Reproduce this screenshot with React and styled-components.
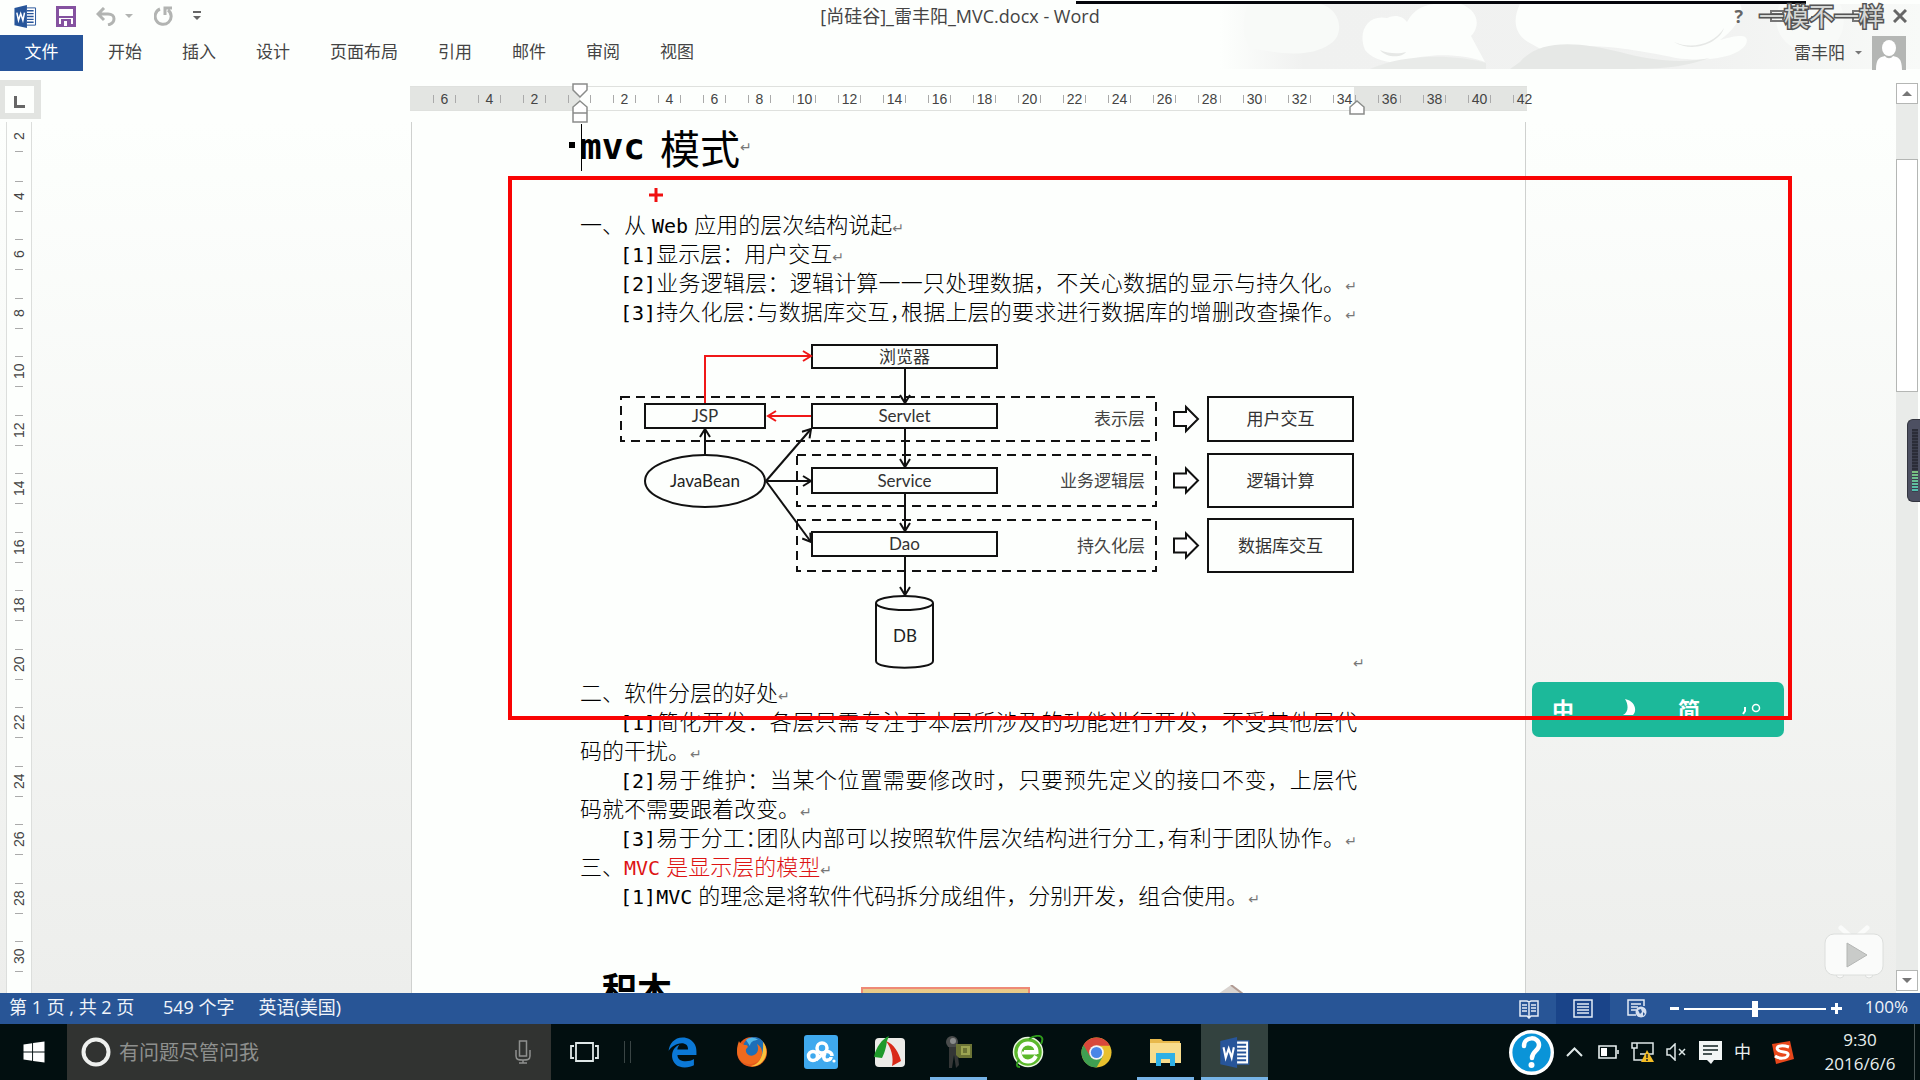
import React from "react";
import styled, { createGlobalStyle, css } from "styled-components";
import { FaEdgeLegacy, FaWindows, FaInternetExplorer } from "react-icons/fa";

const Global = createGlobalStyle`
  * { box-sizing: border-box; }
  body { margin: 0; background: #fdfffd; overflow: hidden; }
  button, input { font: inherit; color: inherit; border: 0; padding: 0; margin: 0; background: none; }
  button { cursor: pointer; }
  svg { display: block; flex: none; }
`;

const UI = '"Open Sans", "Noto Sans CJK SC", sans-serif';

const Desktop = styled.div`
  position: relative;
  height: 100vh;
  display: flex;
  flex-direction: column;
  font-family: ${UI};
  font-size: 17px;
  line-height: 24px;
  color: #444;
  overflow: hidden;
`;

/* ---------- header ---------- */
const Header = styled.header`
  position: relative;
  height: 71px;
  flex: none;
  display: flex;
  flex-direction: column;
`;
const HeaderArt = styled.svg`
  position: absolute;
  right: 0;
  top: 4px;
`;
const TitleRow = styled.div`
  position: relative;
  height: 35px;
  display: flex;
  align-items: center;
  padding-bottom: 3px;
`;
const QuickAccess = styled.div`
  flex: 1;
  display: flex;
  align-items: center;
  padding-left: 13px;
`;
const QuickButton = styled.button`
  display: flex;
  margin-right: ${(p) => p.$gap || 0}px;
`;
const Title = styled.h1`
  margin: 0;
  font-size: 18px;
  font-weight: 400;
  white-space: nowrap;
`;
const WindowButtons = styled.div`
  flex: 1;
  display: flex;
  justify-content: flex-end;
  align-items: center;
  gap: 27px;
  padding-right: 13px;
`;
const WindowButton = styled.button`
  display: flex;
  font-weight: 700;
  font-size: 18px;
  color: #666;
`;
const TabRow = styled.nav`
  position: relative;
  height: 36px;
  display: flex;
  align-items: stretch;
`;
const FileTab = styled.button`
  width: 83px;
  background: #27559a;
  color: #fff;
  padding-bottom: 3px;
`;
const Tabs = styled.div`
  flex: 1;
  display: flex;
  gap: 40px;
  padding-left: 25px;
  padding-bottom: 3px;
`;
const Account = styled.div`
  display: flex;
  align-items: center;
  gap: 10px;
  padding-right: 14px;
`;

/* ---------- work area ---------- */
const Body = styled.div`
  flex: 1;
  min-height: 0;
  display: grid;
  grid-template-columns: 41px 1fr 24px;
  grid-template-rows: 51px 1fr;
`;
const Corner = styled.div`
  padding-top: 9px;
`;
const TabSelector = styled.button`
  display: flex;
  align-items: flex-end;
  justify-content: center;
  width: 41px;
  height: 39px;
  padding-bottom: 5px;
  border: solid #e2e4e1;
  border-width: 6px 7px 6px 5px;
  background: #fdfffd;
`;
const RulerBar = styled.div`
  display: flex;
  justify-content: center;
  padding-top: 15px;
`;
const Ruler = styled.div`
  position: relative;
  width: 1117px;
  height: 25px;
  padding: 1px 0 0 12px;
  display: flex;
  border: solid #dfe1de;
  border-width: 1px 0;
  background: linear-gradient(90deg, #e3e5e2 170px, #fdfffd 170px, #fdfffd 944px, #e3e5e2 944px);
  font: 14px/22px "Liberation Sans", sans-serif;
  color: #444;
`;
const RulerCell = styled.span`
  flex: none;
  width: 45px;
  display: flex;
  align-items: center;
  justify-content: center;
  &::before, &::after {
    content: "";
    width: 1px;
    height: 8px;
    background: #aaa;
  }
  &:last-of-type::after { background: transparent; }
`;
const RulerNumber = styled.span`
  width: 21px;
  display: flex;
  justify-content: center;
`;
const Marker = styled.svg`
  position: absolute;
  left: ${(p) => p.$left}px;
  top: ${(p) => p.$top}px;
`;
const Scroll = styled.div`
  grid-column: 3;
  grid-row: 1 / 3;
  margin: 12px 2px 2px 0;
  width: 22px;
  display: flex;
  flex-direction: column;
  background: #e9ebe9;
`;
const ScrollButton = styled.button`
  height: 21px;
  display: flex;
  align-items: center;
  justify-content: center;
  background: #fff;
  border: 1px solid #b4b6b4;
`;
const ScrollTrack = styled.div`
  flex: 1;
  padding-top: 55px;
`;
const ScrollThumb = styled.div`
  height: 233px;
  background: #fff;
  border: 1px solid #b4b6b4;
`;
const Side = styled.div`
  display: flex;
  padding-left: 6px;
  background: linear-gradient(#fdfffd, #edeeec);
`;
const VRuler = styled.div`
  width: 26px;
  display: flex;
  flex-direction: column;
  padding-bottom: 7px;
  background: #fdfffd;
  border: solid #dcdedc;
  border-width: 0 1px;
  font: 14px/16px "Liberation Sans", sans-serif;
  color: #444;
`;
const VCell = styled.span`
  flex: ${(p) => (p.$first ? "0 0 45px" : 1)};
  display: flex;
  flex-direction: column;
  align-items: center;
  justify-content: ${(p) => (p.$first ? "flex-start" : "center")};
  &::before, &::after {
    content: "";
    width: 8px;
    height: ${(p) => (p.$first ? 0 : 1)}px;
    background: #aaa;
  }
  &::after { height: 1px; }
`;
const VNumber = styled.span`
  height: 29px;
  display: flex;
  align-items: center;
  justify-content: center;
  writing-mode: vertical-rl;
  transform: rotate(180deg);
`;
const Canvas = styled.main`
  min-height: 0;
  display: flex;
  justify-content: center;
  background: linear-gradient(#fdfffd, #edeeec);
  overflow: hidden;
`;
const Page = styled.article`
  width: 1115px;
  padding: 0 168px;
  background: #fdfffd;
  border: solid #cfd1cf;
  border-width: 0 1px;
  color: #000;
  font: 22px/29px "DejaVu Sans Mono", "Noto Sans CJK SC", sans-serif;
`;
const Heading = styled.h2`
  position: relative;
  display: flex;
  align-items: center;
  height: 50px;
  margin: 0 0 37px;
  font: 400 40px/50px "Noto Sans CJK SC", sans-serif;
  color: #000;
`;
const HeadingLatin = styled.span`
  font: 700 36px/50px "DejaVu Sans Mono", monospace;
  margin-right: 15px;
`;
const Caret = styled.span`
  position: absolute;
  left: 1px;
  top: 2px;
  width: 1px;
  height: 47px;
  background: #000;
`;
const Bullet = styled.span`
  position: absolute;
  left: -11px;
  top: 20px;
  width: 6px;
  height: 6px;
  background: #000;
`;
const Line = styled.p`
  margin: 0;
  font-family: "Noto Sans CJK SC", sans-serif;
  font-weight: 300;
  text-align: justify;
  text-align-last: ${(p) => (p.$full ? "justify" : "auto")};
  text-indent: ${(p) => (p.$item ? 40 : 0)}px;
  text-autospace: no-autospace;
  text-spacing-trim: space-all;
`;
const Latin = styled.span`
  font: 20px/20px "DejaVu Sans Mono", monospace;
  margin-left: ${(p) => (p.$before ? 6 : 0)}px;
  margin-right: ${(p) => (p.$after ? 6 : 0)}px;
`;
const Half = styled.span`
  font-feature-settings: "halt";
`;
const Red = styled.span`
  color: #dd1414;
`;
const Mark = styled.span`
  font: 14px/14px "DejaVu Sans", sans-serif;
  color: #777;
`;
const DiagramSvg = styled.svg`
  overflow: visible;
`;
const NextSection = styled.div`
  display: flex;
  align-items: flex-start;
  padding: 55px 0 0 22px;
`;
const NextTitle = styled.h2`
  margin: 0;
  width: 259px;
  font: 700 35px/48px "Noto Sans CJK SC", sans-serif;
  color: #000;
`;
const NextBox = styled.div`
  width: 169px;
  height: 30px;
  margin: 23px 188px 0 0;
  border: 2px solid #ee8a76;
  background: linear-gradient(#e9c98a, #e2d07f);
`;
const NextShape = styled.svg`
  margin-top: 21px;
`;

/* ---------- status bar ---------- */
const StatusBar = styled.footer`
  height: 31px;
  flex: none;
  display: flex;
  align-items: stretch;
  background: #285596;
  color: #f0f4fa;
`;
const StatusInfo = styled.div`
  flex: 1;
  display: flex;
  align-items: center;
  gap: 24px;
  padding: 0 0 3px 9px;
  font-size: 18px;
`;
const PageCount = styled.span`
  min-width: 130px;
`;
const ViewButton = styled.button`
  width: 54px;
  display: flex;
  align-items: center;
  justify-content: center;
  background: ${(p) => (p.$active ? "#1a4489" : "transparent")};
`;
const Zoom = styled.label`
  display: flex;
  align-items: center;
  gap: 5px;
  padding-left: 6px;
`;
const Range = styled.input`
  appearance: none;
  width: 142px;
  height: 16px;
  background: linear-gradient(#fff, #fff) center / 100% 2px no-repeat;
  &::-webkit-slider-thumb {
    appearance: none;
    width: 6px;
    height: 16px;
    background: #fff;
  }
`;
const Percent = styled.output`
  width: 78px;
  padding: 0 12px 3px 0;
  text-align: right;
  align-self: center;
`;

/* ---------- task bar ---------- */
const TaskBar = styled.div`
  height: 56px;
  flex: none;
  display: flex;
  align-items: stretch;
  background: #020f10;
  color: #e8efef;
`;
const Start = styled.button`
  width: 67px;
  display: flex;
  align-items: center;
  justify-content: center;
  color: #fff;
`;
const Search = styled.label`
  width: 484px;
  display: flex;
  align-items: center;
  padding: 0 20px 0 14px;
  background: #313331;
`;
const SearchInput = styled.input`
  flex: 1;
  min-width: 0;
  height: 32px;
  margin-left: 8px;
  font-size: 20px;
  outline: 0;
  &::placeholder { color: #8e908e; opacity: 1; }
`;
const TaskView = styled.button`
  padding: 0 25px 0 19px;
  display: flex;
  align-items: center;
`;
const Divider = styled.span`
  align-self: center;
  width: 7px;
  height: 22px;
  margin-right: 18px;
  border: solid #3a4545;
  border-width: 0 1px;
`;
const Apps = styled.div`
  flex: 1;
  display: flex;
  gap: 2px;
`;
const TaskButton = styled.button`
  width: 67px;
  display: flex;
  align-items: center;
  justify-content: center;
  ${(p) => p.$running && css`
    background: linear-gradient(#76b3e6, #76b3e6) bottom / 57px 3px no-repeat;
  `}
  ${(p) => p.$active && css`
    background: linear-gradient(#76b3e6, #76b3e6) bottom / 100% 3px no-repeat, #33423f;
  `}
`;
const Tray = styled.div`
  display: flex;
  align-items: center;
  gap: 12px;
`;
const TrayButton = styled.button`
  display: flex;
  margin-right: ${(p) => p.$gap || 0}px;
`;
const Clock = styled.time`
  width: 108px;
  text-align: center;
  font-size: 17px;
`;
const ShowDesktop = styled.button`
  align-self: stretch;
  width: 6px;
  margin-left: -12px;
  border-left: 1px solid #4a5555;
`;

/* ---------- overlays ---------- */
const Selection = styled.div`
  position: absolute;
  left: 508px;
  top: 176px;
  width: 1284px;
  height: 544px;
  border: 4px solid #f90404;
  pointer-events: none;
`;
const Cross = styled.svg`
  position: absolute;
  left: 649px;
  top: 188px;
`;
const Watermark = styled.div`
  position: absolute;
  right: 36px;
  top: 1px;
  font: 25px/28px "Noto Sans CJK SC", sans-serif;
  color: #d6d8d6;
  -webkit-text-stroke: 3px #555;
  paint-order: stroke fill;
`;
const TopStrip = styled.div`
  position: absolute;
  left: 1076px;
  top: 1px;
  width: 730px;
  height: 3px;
  background: #05060c;
`;
const Ime = styled.div`
  position: absolute;
  left: 1532px;
  top: 682px;
  width: 252px;
  height: 55px;
  border-radius: 7px;
  background: #1cb99a;
  color: #fff;
`;
const ImeRow = styled.div`
  height: 36px;
  overflow: hidden;
  display: flex;
  justify-content: space-between;
  padding: 13px 22px 0 20px;
  font: 700 22px/26px "Noto Sans CJK SC", sans-serif;
`;
const Level = styled.div`
  position: absolute;
  right: 0;
  top: 419px;
  width: 13px;
  height: 83px;
  padding: 9px 2px 9px 4px;
  border-radius: 6px 0 0 6px;
  background: #4d5062;
  border: solid #33353f;
  border-width: 1px 0 1px 1px;
`;
const LevelBars = styled.div`
  height: 100%;
  background:
    repeating-linear-gradient(transparent 0 2px, #3b3e4c 2px 3px),
    linear-gradient(#2b2d38 65%, #7fc07a 65%, #4fc0b4);
`;
const Player = styled.svg`
  position: absolute;
  right: 35px;
  bottom: 99px;
`;

/* ---------- drawings ---------- */
const WordIcon = ({ w, h }) => (
  <svg width={w} height={h} viewBox="0 0 24 24">
    <path d="M12 3h11v18H12z" fill="#fff" stroke="#27559a" />
    <path d="M14 6h7M14 9h7M14 12h7M14 15h7M14 18h7" stroke="#27559a" strokeWidth="1.4" />
    <path d="M1 3l13-3v24L1 21z" fill="#27559a" />
    <path d="M3.5 8l1.7 8L7.5 9l2.3 7 1.7-8" fill="none" stroke="#fff" strokeWidth="1.6" />
  </svg>
);

const Tri = ({ up, s = 8, fill = "#777" }) => (
  <svg width={s} height={s / 2} viewBox="0 0 8 4"><path d={up ? "M0 4l4-4 4 4z" : "M0 0h8L4 4z"} fill={fill} /></svg>
);

const appIcons = [
  { name: "Edge", icon: <FaEdgeLegacy size={31} color="#0b78d6" /> },
  {
    name: "Firefox",
    icon: (
      <svg width="32" height="32" viewBox="0 0 32 32">
        <circle cx="16" cy="16" r="15" fill="#e5591c" />
        <circle cx="18" cy="12" r="11" fill="#1d6fb8" />
        <path d="M10 4c3-3 9-3 12 0-4 0-8 2-8 6z" fill="#54b8e8" />
        <path d="M3 5c1 3 3 3 6 4 3 0 4 2 1 4-1 5 4 8 8 6 4-2 5-6 3-11 5 3 7 9 3 15-5 7-17 7-21-1C0 16 1 10 3 5z" fill="#ef6a1e" />
        <path d="M27 6c4 5 5 13 0 19-3 4-8 6-12 5 8-2 13-9 12-24z" fill="#fbc23c" />
      </svg>
    ),
  },
  {
    name: "百度云",
    icon: (
      <svg width="34" height="34" viewBox="0 0 34 34">
        <rect width="34" height="34" rx="3" fill="#3fa9ee" />
        <g fill="none" stroke="#fff" strokeWidth="3.500">
          <circle cx="18" cy="13" r="5" /><circle cx="9" cy="21" r="4.500" />
          <path d="M12 25l8-7c3-3 8-1 8 3M21 18c-3 5 0 8 3 7 2 0 3-2 3-3" />
        </g>
        <circle cx="30" cy="26" r="1.600" fill="#fff" />
      </svg>
    ),
  },
  {
    name: "FastStone",
    icon: (
      <svg width="32" height="32" viewBox="0 0 32 32">
        <rect x="1" y="2" width="30" height="29" rx="4" fill="#ecebe8" />
        <path d="M0 21C2 11 8 3 15 0l-2 5c-1 8-3 13-5 17z" fill="#1f9a2a" />
        <path d="M12 5c8 3 13 12 15 20l-9 5c2-9-1-18-6-25z" fill="#d92a18" />
      </svg>
    ),
  },
  {
    name: "录像",
    running: true,
    icon: (
      <svg width="30" height="32" viewBox="0 0 30 32">
        <circle cx="8" cy="6" r="6" fill="#4a4c4c" /><circle cx="9" cy="5" r="3" fill="#8a8c8c" />
        <path d="M5 11h8l2 18-3 3-2-13-2 13H5z" fill="#343636" />
        <path d="M12 8h16v14H15l-3-3z" fill="#6c7436" /><path d="M17 10h9v9h-9z" fill="#9ca552" />
        <path d="M19 12h4v5h-4z" fill="#6c7436" />
      </svg>
    ),
  },
  {
    name: "浏览器",
    icon: (
      <svg width="32" height="34" viewBox="0 0 32 34">
        <circle cx="16" cy="17" r="14.500" fill="#5cb82c" stroke="#e9f6e0" strokeWidth="1.500" />
        <path d="M24 21c-2 4-5 5.500-8 5.500-5 0-8.500-4-8.500-9s3.500-9 8.500-9 8.500 3.500 8.500 8.500H12" fill="none" stroke="#fff" strokeWidth="4" />
        <path d="M10 18h15" stroke="#fff" strokeWidth="3" />
        <path d="M17 4c6-4 12-4 13-1 1 2 0 4-1 6M7 25c-3 4-3 7 1 7" fill="none" stroke="#2f9a1c" strokeWidth="2" />
      </svg>
    ),
  },
  {
    name: "Chrome",
    icon: (
      <svg width="31" height="31" viewBox="0 0 32 32">
        <circle cx="16" cy="16" r="15.500" fill="#e8c02d" />
        <path d="M16 16L2.600 8.200A15.500 15.500 0 0 0 16 31.500L22.500 20z" fill="#3f9f52" />
        <path d="M2.600 8.200L9.500 20 16 9h13.800L29.400 8.200A15.500 15.500 0 0 0 2.600 8.200z" fill="#d8483b" />
        <circle cx="16" cy="16" r="7.500" fill="#f4f4f4" /><circle cx="16" cy="16" r="5.800" fill="#4a86e8" />
      </svg>
    ),
  },
  {
    name: "资源管理器",
    running: true,
    icon: (
      <svg width="31" height="28" viewBox="0 0 31 28">
        <path d="M0 1h11l2 2h17v22H0z" fill="#e8b94c" /><path d="M0 5h31v20H0z" fill="#f8dc8c" />
        <path d="M6 28V15h19v13h-5v-7h-9v7z" fill="#2fb0e6" />
      </svg>
    ),
  },
  { name: "Word", running: true, active: true, icon: <WordIcon w={33} h={31} /> },
];

const boxes = [
  [812, 345, 185, 23, "浏览器"],
  [812, 404, 185, 24, "Servlet"],
  [645, 404, 120, 24, "JSP"],
  [812, 468, 185, 25, "Service"],
  [812, 532, 185, 24, "Dao"],
  [1208, 397, 145, 44, "用户交互"],
  [1208, 454, 145, 53, "逻辑计算"],
  [1208, 519, 145, 53, "数据库交互"],
];
const layers = [
  [621, 397, 535, 44, "表示层"],
  [797, 455, 359, 51, "业务逻辑层"],
  [797, 520, 359, 51, "持久化层"],
];
const arrows = ["M905 368V403", "M905 428V467", "M905 493V531", "M905 556V595", "M705 454V429", "M766 481L811 429", "M766 481H811", "M766 481L811 542"];

const Diagram = () => (
  <DiagramSvg viewBox="580 325 779 352" width="779" height="352" fontFamily='Lato, "Noto Sans CJK SC", sans-serif' fontSize="17">
    <defs>
      {[["black", "#111"], ["red", "#f01818"]].map(([id, c]) => (
        <marker key={id} id={id} viewBox="0 0 12 12" refX="10" refY="6" markerWidth="12" markerHeight="12" markerUnits="userSpaceOnUse" orient="auto">
          <path d="M2 1l8 5-8 5" fill="none" stroke={c} strokeWidth="2" />
        </marker>
      ))}
    </defs>
    {layers.map(([x, y, w, h, t]) => (
      <g key={t}>
        <rect x={x} y={y} width={w} height={h} fill="none" stroke="#111" strokeWidth="2" strokeDasharray="9 6" />
        <text x="1145" y={y + h / 2 + 6} textAnchor="end" fill="#444">{t}</text>
        <path transform={`translate(1174 ${y + h / 2})`} d="M0-7H12V-12L24 0 12 12V7H0z" fill="#fff" stroke="#111" strokeWidth="2" />
      </g>
    ))}
    {boxes.map(([x, y, w, h, t]) => (
      <g key={t}>
        <rect x={x} y={y} width={w} height={h} fill="#fdfffd" stroke="#111" strokeWidth="2" />
        <text x={x + w / 2} y={y + h / 2 + 6} textAnchor="middle" fill="#333">{t}</text>
      </g>
    ))}
    <ellipse cx="705" cy="481" rx="60" ry="26" fill="#fdfffd" stroke="#111" strokeWidth="2" />
    <text x="705" y="487" textAnchor="middle" fill="#222">JavaBean</text>
    <path d="M876 603v58c0 9 57 9 57 0v-58" fill="#fdfffd" stroke="#111" strokeWidth="2" />
    <ellipse cx="904.500" cy="603" rx="28.500" ry="7" fill="#fdfffd" stroke="#111" strokeWidth="2" />
    <text x="905" y="642" textAnchor="middle" fill="#222">DB</text>
    {arrows.map((d) => <path key={d} d={d} stroke="#111" strokeWidth="2" markerEnd="url(#black)" />)}
    <path d="M705 403V356H811" fill="none" stroke="#f01818" strokeWidth="2" markerEnd="url(#red)" />
    <path d="M811 416H768" fill="none" stroke="#f01818" strokeWidth="2" markerEnd="url(#red)" />
    <text x="1353" y="668" fontSize="14" fontFamily="DejaVu Sans" fill="#777">↵</text>
  </DiagramSvg>
);

const rulerNumbers = [6, 4, 2, "", ...Array.from({ length: 21 }, (_, i) => (i + 1) * 2)];
const vNumbers = Array.from({ length: 15 }, (_, i) => (i + 1) * 2);
const tabs = ["开始", "插入", "设计", "页面布局", "引用", "邮件", "审阅", "视图"];

const Item = ({ n, full, children }) => (
  <Line $item $full={full}><Latin>[{n}]</Latin>{children}<Mark>↵</Mark></Line>
);

export default function App() {
  return (
    <Desktop>
      <Global />
      <Header>
        <HeaderArt width="700" height="65" viewBox="0 0 700 65">
          <defs>
            <linearGradient id="fade"><stop offset="0" stopColor="#fdfffd" /><stop offset=".12" stopColor="#f0f1f0" /><stop offset=".7" stopColor="#f1f2f1" /><stop offset="1" stopColor="#f8faf8" /></linearGradient>
          </defs>
          <rect width="700" height="65" fill="url(#fade)" />
          <path d="M28 0h72c20 4 26 30 10 40-20 14-50 10-80 4-8-10-8-30-2-44z" fill="#f8faf8" />
          <path d="M145 46c-8-20 4-36 22-32 8-4 16-2 20 4 10-18 24-20 54-18 20 8 18 24 10 32l14 26c-20-8-60-10-80 0-20 2-34-4-40-12z" fill="#fcfefc" />
          <path d="M300 0h220c6 10-6 26-20 36 20-6 30-6 26 4-8 14-40 18-70 14-60-12-90-16-130-6l-18-10c-16-10-14-26-8-38z" fill="#fcfefc" />
          <path d="M300 58c20-24 60-20 100-10 30 8 60 12 90 6-30 10-50 11-90 11H290z" fill="#e6e8e6" />
          <path d="M454 38c18 8 40 2 50-14-4 14-30 26-50 14zM160 46c8 4 20 4 26 2-4 6-20 6-26-2z" fill="#e6e8e6" />
          <path d="M150 65c30-14 80-16 116-6v6z" fill="#e9ebe9" />
          <path d="M560 0h60c10 20 0 50-30 50-30-6-40-30-30-50z" fill="#f8faf8" />
        </HeaderArt>
        <TitleRow>
          <QuickAccess>
            <QuickButton $gap={19} aria-label="Word"><WordIcon w={24} h={23} /></QuickButton>
            <QuickButton $gap={20} aria-label="保存">
              <svg width="20" height="21" viewBox="0 0 20 21"><path d="M1.500 1.500h17v18h-17z" fill="#fff" stroke="#8552a0" strokeWidth="3" /><path d="M3 10h14v2H3zM5 13h10v7H5z" fill="#8552a0" /><path d="M8 15h3v5H8z" fill="#fff" /></svg>
            </QuickButton>
            <QuickButton $gap={9} aria-label="撤消">
              <svg width="20" height="19" viewBox="0 0 20 19"><path d="M2 7h10c8 0 8 9 0 11M8 1L2 7l6 6" fill="none" stroke="#b2b4b2" strokeWidth="3" /></svg>
            </QuickButton>
            <QuickButton $gap={21} aria-label="撤消列表"><Tri fill="#b2b4b2" /></QuickButton>
            <QuickButton $gap={20} aria-label="重复">
              <svg width="19" height="20" viewBox="0 0 19 20"><path d="M6 3a8 8 0 1 0 8 1M11 9V2h7" fill="none" stroke="#b2b4b2" strokeWidth="3" /></svg>
            </QuickButton>
            <QuickButton aria-label="自定义">
              <svg width="8" height="10" viewBox="0 0 8 10"><path d="M0 0h8v2H0zM0 5h8L4 9z" fill="#666" /></svg>
            </QuickButton>
          </QuickAccess>
          <Title>[尚硅谷]_雷丰阳_MVC.docx - Word</Title>
          <WindowButtons>
            <WindowButton aria-label="帮助">?</WindowButton>
            <WindowButton aria-label="功能区"><svg width="14" height="12"><path d="M1 1h12v10H1zM1 4h12" fill="none" stroke="#777" strokeWidth="2" /></svg></WindowButton>
            <WindowButton aria-label="最小化"><svg width="14" height="12"><path d="M0 7h14" stroke="#777" strokeWidth="2" /></svg></WindowButton>
            <WindowButton aria-label="还原"><svg width="14" height="12"><path d="M1 1h12v10H1z" fill="none" stroke="#777" strokeWidth="2" /></svg></WindowButton>
            <WindowButton aria-label="关闭"><svg width="14" height="14"><path d="M1 1l12 12M13 1L1 13" stroke="#666" strokeWidth="3" /></svg></WindowButton>
          </WindowButtons>
        </TitleRow>
        <TabRow>
          <FileTab>文件</FileTab>
          <Tabs>{tabs.map((t) => <button key={t}>{t}</button>)}</Tabs>
          <Account>
            <button>雷丰阳</button>
            <Tri s={7} />
            <svg width="34" height="34" viewBox="0 0 34 34"><path d="M0 0h34v34H0z" fill="#b4b6b4" /><ellipse cx="17" cy="12" rx="7" ry="8" fill="#fff" /><path d="M4 34c0-12 4-13 9-14 2 3 6 3 8 0 5 1 9 2 9 14z" fill="#fff" /></svg>
          </Account>
        </TabRow>
      </Header>

      <Body>
        <Corner>
          <TabSelector aria-label="制表符"><svg width="11" height="12"><path d="M1.500 0v10.500H11" fill="none" stroke="#666" strokeWidth="3" /></svg></TabSelector>
        </Corner>
        <RulerBar>
          <Ruler>
            {rulerNumbers.map((n, i) => <RulerCell key={i}><RulerNumber>{n}</RulerNumber></RulerCell>)}
            <Marker $left={162} $top={-4} width="16" height="41" viewBox="0 0 16 41">
              <path d="M1 1h14v6L8 14 1 7zM8 18l7 6v6H1v-6zM1 30h14v9H1z" fill="#fff" stroke="#8a8c8a" strokeWidth="1.500" />
            </Marker>
            <Marker $left={939} $top={13} width="16" height="16" viewBox="0 0 16 16">
              <path d="M8 1l7 6v7H1V7z" fill="#fff" stroke="#8a8c8a" strokeWidth="1.500" />
            </Marker>
          </Ruler>
        </RulerBar>
        <Scroll>
          <ScrollButton aria-label="向上滚动"><Tri up s={10} /></ScrollButton>
          <ScrollTrack><ScrollThumb /></ScrollTrack>
          <ScrollButton aria-label="向下滚动"><Tri s={10} /></ScrollButton>
        </Scroll>
        <Side>
          <VRuler>
            {vNumbers.map((n, i) => <VCell key={n} $first={i === 0}><VNumber>{n}</VNumber></VCell>)}
          </VRuler>
        </Side>
        <Canvas>
          <Page>
            <Heading><Bullet /><Caret /><HeadingLatin>mvc</HeadingLatin>模式<Mark>↵</Mark></Heading>
            <Line>一、从<Latin $before $after>Web</Latin>应用的层次结构说起<Mark>↵</Mark></Line>
            <Item n={1}>显示层：用户交互</Item>
            <Item n={2} full>业务逻辑层：逻辑计算一一只处理数据，不关心数据的显示与持久化。</Item>
            <Item n={3} full>持久化层<Half>：</Half>与数据库交互<Half>，</Half>根据上层的要求进行数据库的增删改查操作。</Item>
            <Diagram />
            <Line>二、软件分层的好处<Mark>↵</Mark></Line>
            <Item n={1}>简化开发：各层只需专注于本层所涉及的功能进行开发，不受其他层代码的干扰。</Item>
            <Item n={2}>易于维护：当某个位置需要修改时，只要预先定义的接口不变，上层代码就不需要跟着改变。</Item>
            <Item n={3} full>易于分工<Half>：</Half>团队内部可以按照软件层次结构进行分工<Half>，</Half>有利于团队协作。</Item>
            <Line>三、<Red><Latin $after>MVC</Latin>是显示层的模型</Red><Mark>↵</Mark></Line>
            <Item n={1}><Latin $after>MVC</Latin>的理念是将软件代码拆分成组件，分别开发，组合使用。</Item>
            <NextSection>
              <NextTitle>积木</NextTitle>
              <NextBox />
              <NextShape width="25" height="16"><path d="M0 9L13 0l12 9v7H0z" fill="#d9d4d0" /><path d="M13 0l12 9" stroke="#b09a92" strokeWidth="2" /></NextShape>
            </NextSection>
          </Page>
        </Canvas>
      </Body>

      <StatusBar>
        <StatusInfo><PageCount>第 1 页 , 共 2 页</PageCount><span>549 个字</span><span>英语(美国)</span></StatusInfo>
        <ViewButton aria-label="阅读视图">
          <svg width="20" height="20" viewBox="0 0 20 20"><path d="M1 2h7l2 1 2-1h7v15h-7l-2 2-2-2H1zM10 3v15M3 6h5M3 9h5M3 12h5M12 6h5M12 9h5M12 12h5" fill="none" stroke="#e4ecf6" strokeWidth="1.500" /></svg>
        </ViewButton>
        <ViewButton $active aria-label="页面视图">
          <svg width="20" height="19" viewBox="0 0 20 19"><path d="M1 1h18v17H1zM4 5h12M4 8h12M4 11h12M4 14h12" fill="none" stroke="#e4ecf6" strokeWidth="1.500" /></svg>
        </ViewButton>
        <ViewButton aria-label="Web 视图">
          <svg width="20" height="19" viewBox="0 0 20 19"><path d="M9 16H1V1h16v6M4 5h10M4 8h7M4 11h5" fill="none" stroke="#e4ecf6" strokeWidth="1.500" /><circle cx="14" cy="13" r="5.500" fill="#d5e0f0" /><path d="M11 11l3-1 1 3-2 2zM16 13l2 2-2 2z" fill="#285596" /></svg>
        </ViewButton>
        <Zoom>
          <svg width="9" height="3"><path d="M0 0h9v3H0z" fill="#fff" /></svg>
          <Range type="range" min="0" max="200" defaultValue="100" aria-label="缩放" />
          <svg width="11" height="11"><path d="M0 4h11v3H0zM4 0h3v11H4z" fill="#fff" /></svg>
        </Zoom>
        <Percent>100%</Percent>
      </StatusBar>

      <TaskBar>
        <Start aria-label="开始菜单"><FaWindows size={24} /></Start>
        <Search>
          <svg width="30" height="30"><circle cx="15" cy="15" r="12.500" fill="none" stroke="#eef0ee" strokeWidth="4" /></svg>
          <SearchInput placeholder="有问题尽管问我" aria-label="搜索" />
          <svg width="16" height="24" viewBox="0 0 16 24"><path d="M4.500 1h7v15h-7zM1 10v6c0 4 3 4 7 4s7 0 7-4v-6M8 20v3M4 23h8" fill="none" stroke="#8e908e" strokeWidth="1.500" /></svg>
        </Search>
        <TaskView aria-label="任务视图">
          <svg width="29" height="20" viewBox="0 0 29 20"><path d="M6 1h17v18H6zM4 4H1v12h3M25 4h3v12h-3" fill="none" stroke="#dfe8e8" strokeWidth="1.800" /></svg>
        </TaskView>
        <Divider />
        <Apps>
          {appIcons.map((a) => <TaskButton key={a.name} aria-label={a.name} $running={a.running} $active={a.active}>{a.icon}</TaskButton>)}
        </Apps>
        <Tray>
          <TrayButton aria-label="帮助">
            <svg width="45" height="45" viewBox="0 0 45 45"><circle cx="22.500" cy="22.500" r="20.800" fill="#0a94d8" stroke="#fff" strokeWidth="3.400" /><path d="M15 16c0-10 15-10 15-1 0 6-7 6-7 13" fill="none" stroke="#fff" strokeWidth="4.500" strokeLinecap="round" /><circle cx="22.500" cy="35" r="3" fill="#fff" /></svg>
          </TrayButton>
          <TrayButton $gap={3} aria-label="显示隐藏的图标"><svg width="17" height="10"><path d="M1 9l7.500-7.500L16 9" fill="none" stroke="#dfe8e8" strokeWidth="2" /></svg></TrayButton>
          <TrayButton aria-label="电池"><svg width="21" height="14"><path d="M1 1h17v12H1zM20 5v4" fill="none" stroke="#e8efef" strokeWidth="1.600" /><path d="M3 3h6v8H3z" fill="#fff" /></svg></TrayButton>
          <TrayButton aria-label="网络"><svg width="23" height="21" viewBox="0 0 23 21"><path d="M6 1h16v11H9M1 1h5v5H1zM3 6v12h9" fill="none" stroke="#dfe8e8" strokeWidth="1.500" /><path d="M16 8l7 12H10z" fill="#f5bd24" /><path d="M16 12v4M16 17v2" stroke="#222" strokeWidth="1.500" /></svg></TrayButton>
          <TrayButton aria-label="音量"><svg width="21" height="18" viewBox="0 0 21 18"><path d="M1 6h3l5-5v16l-5-5H1zM13 6l6 6M19 6l-6 6" fill="none" stroke="#dfe8e8" strokeWidth="1.500" /></svg></TrayButton>
          <TrayButton aria-label="通知"><svg width="23" height="23" viewBox="0 0 23 23"><path d="M0 0h23v19h-8l-3 4-4-4H0z" fill="#f2f6f6" /><path d="M4 5h15M4 9h15M4 13h9" stroke="#122" strokeWidth="1.500" /></svg></TrayButton>
          <TrayButton $gap={8}>中</TrayButton>
          <TrayButton aria-label="搜狗"><svg width="23" height="23" viewBox="0 0 23 23"><path d="M1 3l18-3 4 18-18 5z" fill="#e8471b" /><path d="M18 6C9 3 4 6 7 9s11 1 10 5-9 4-13 1" fill="none" stroke="#fff" strokeWidth="3" /></svg></TrayButton>
          <Clock>9:30<br />2016/6/6</Clock>
          <ShowDesktop aria-label="显示桌面" />
        </Tray>
      </TaskBar>

      <TopStrip />
      <Watermark>一模不一样</Watermark>
      <Ime>
        <ImeRow>
          <span>中</span>
          <svg width="20" height="20" viewBox="0 0 20 20"><path d="M9 0c14 3 14 20-3 20-3 0-5-2-6-3 12 1 14-9 9-17z" fill="#fff" transform="translate(0 4)" /></svg>
          <span>简</span>
          <svg width="20" height="24"><circle cx="14" cy="13" r="3.500" fill="none" stroke="#fff" strokeWidth="1.500" /><path d="M3 12v4l-2 3" fill="none" stroke="#fff" strokeWidth="2" /></svg>
        </ImeRow>
      </Ime>
      <Selection />
      <Cross width="14" height="14"><path d="M0 7h14M7 0v14" stroke="#f01010" strokeWidth="3" /></Cross>
      <Level><LevelBars /></Level>
      <Player width="62" height="56" viewBox="0 0 62 56">
        <g fill="#fafbfa" stroke="#dcdedc" strokeWidth="1">
          <path d="M18 3l9 8M44 3l-9 8" stroke="#fafbfa" strokeWidth="5" strokeLinecap="round" />
          <circle cx="17" cy="49" r="4" /><circle cx="46" cy="49" r="4" />
          <rect x="2" y="9" width="58" height="41" rx="9" />
        </g>
        <path d="M24 18l20 12-20 12z" fill="#c9cbc9" stroke="#b4b6b4" />
      </Player>
    </Desktop>
  );
}
